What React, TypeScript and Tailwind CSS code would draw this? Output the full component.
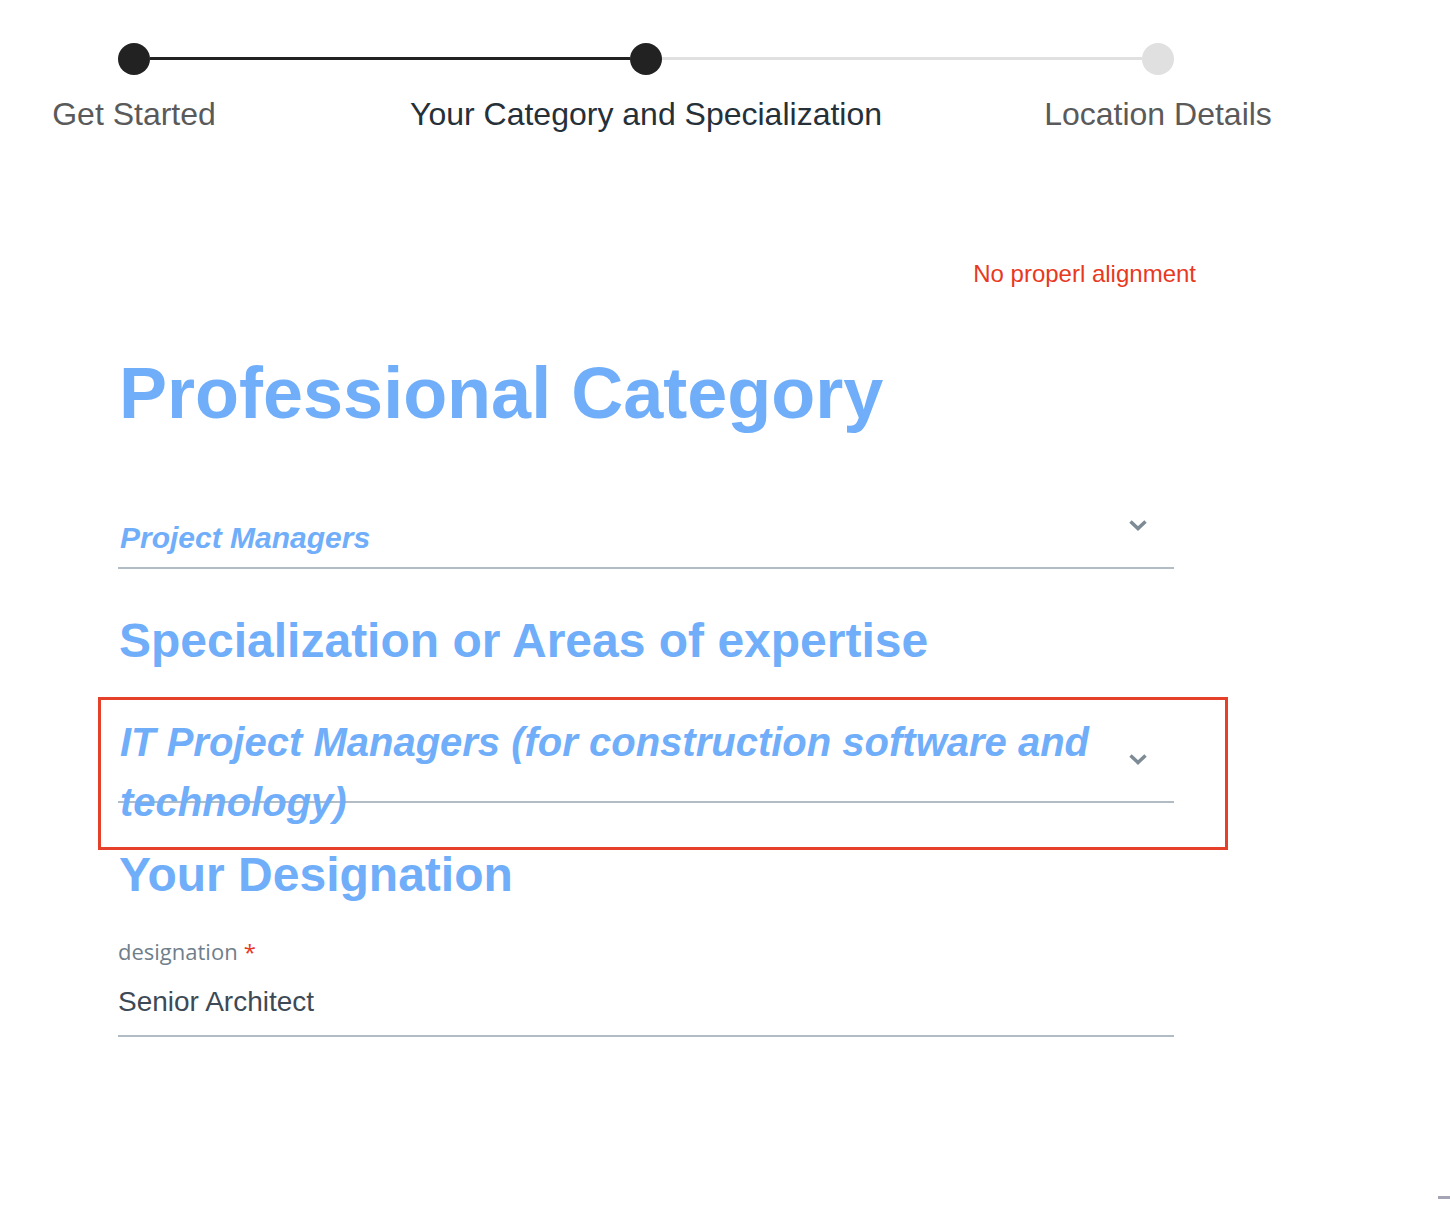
import type { ReactNode } from 'react';

const steps = [
  { label: 'Get Started', done: true, active: false },
  { label: 'Your Category and Specialization', done: true, active: true },
  { label: 'Location Details', done: false, active: false },
];

function Chevron() {
  return (
    <svg width="20" height="12" viewBox="0 0 20 12" className="shrink-0 self-start mt-[11px] mr-[26px]">
      <polyline points="2.5,2.5 10,9.5 17.5,2.5" fill="none" stroke="#7d8b96" strokeWidth="3.5" />
    </svg>
  );
}

function Select({ children, size }: { children: ReactNode; size: 'sm' | 'lg' }) {
  return (
    <div className="flex items-center h-[61px] border-b-2 border-[#b1bcc4]">
      <div
        className={`flex-1 pl-[2px] pr-[30px] leading-[60px] font-bold italic text-[#70aefa] ${
          size === 'sm' ? 'text-[30px]' : 'text-[40px]'
        }`}
      >
        {children}
      </div>
      <Chevron />
    </div>
  );
}

function App() {
  return (
    <div className="relative h-[1230px] overflow-hidden bg-white font-['Liberation_Sans',Arial,sans-serif]">
      {/* stepper */}
      <div className="flex items-start pl-[118px] pt-[43px]">
        {steps.map((step, i) => (
          <div key={step.label} className="flex items-start">
            {i > 0 && (
              <div
                className={`w-[480px] h-[3px] mt-[14px] ${steps[i].done ? 'bg-[#222222]' : 'bg-[#e0e0e0]'}`}
              />
            )}
            <div className="flex flex-col items-center w-8">
              <div className={`w-8 h-8 rounded-full ${step.done ? 'bg-[#222222]' : 'bg-[#e0e0e0]'}`} />
              <div
                className={`mt-[20px] whitespace-nowrap text-[32px] leading-[38px] ${
                  step.active ? 'text-[#263039]' : 'text-[#5a5a5a]'
                }`}
              >
                {step.label}
              </div>
            </div>
          </div>
        ))}
      </div>

      <div className="pl-[118px] w-[1174px]">
        <div className="w-[1078px] mt-[127px] text-right text-[24px] leading-[28px] text-[#e8391f]">
          No properl alignment
        </div>

        <h1 className="mt-[65px] pl-[1px] text-[72px] leading-[80px] font-bold text-[#70aefa]">
          Professional Category
        </h1>

        <div className="mt-[75px]">
          <Select size="sm">Project Managers</Select>
        </div>

        <h2 className="mt-[42px] pl-[1px] text-[48px] leading-[60px] font-bold text-[#70aefa]">
          Specialization or Areas of expertise
        </h2>

        <div className="relative mt-[71px]">
          <Select size="lg">IT Project Managers (for construction software and technology)</Select>
          <div className="absolute -left-[20px] -top-[45px] w-[1130px] h-[153px] border-[3px] border-[#e5402a] pointer-events-none" />
        </div>

        <h2 className="mt-[44px] pl-[1px] text-[48px] leading-[56px] font-bold text-[#70aefa]">
          Your Designation
        </h2>

        <div className="mt-[35px] text-[22px] leading-[26px] text-[#6f7f8c] font-['Open_Sans',sans-serif]">
          designation<span className="ml-[6px] text-[#e8391f]">*</span>
        </div>
        <div className="mt-[22px] pb-[17px] border-b-2 border-[#b1bcc4] text-[28px] leading-[32px] text-[#3d4a56]">
          Senior Architect
        </div>
      </div>

      <div className="absolute right-0 top-[1196px] w-[12px] h-[3px] bg-[#a4a4b4]" />
    </div>
  );
}

export default App;
